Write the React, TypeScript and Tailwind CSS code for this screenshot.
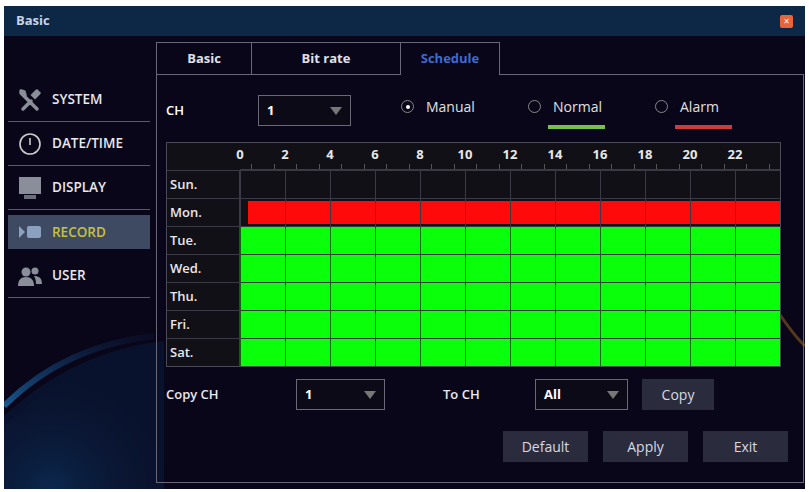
import React from "react";

const hours = [0, 2, 4, 6, 8, 10, 12, 14, 16, 18, 20, 22];
const days = ["Sun.", "Mon.", "Tue.", "Wed.", "Thu.", "Fri.", "Sat."];

function Select({ v, w }: { v: string; w: string }) {
  return (
    <div className={`${w} h-[31px] border border-[#6a6878] bg-[#0b0a16] flex items-center justify-between px-2`}>
      <span className="text-white font-bold text-[13px]">{v}</span>
      <svg width="12" height="10" viewBox="0 0 12 10"><path d="M0 1h12L6 9z" fill="#777"/></svg>
    </div>
  );
}

function Btn({ t, w }: { t: string; w: string }) {
  return <div className={`${w} h-[31px] bg-[#2a2c3e] text-[#d8d8e0] text-[14px] flex items-center justify-center`}>{t}</div>;
}

function Radio({ label, checked, line }: { label: string; checked?: boolean; line?: string }) {
  return (
    <div className="flex flex-col">
      <div className="flex items-center gap-3">
        <div className="w-[13px] h-[13px] rounded-full border border-[#888] flex items-center justify-center">
          {checked && <div className="w-[4px] h-[4px] rounded-full bg-white" />}
        </div>
        <span className="text-[#e0e0e0] text-[14px]">{label}</span>
      </div>
      <div className={`ml-[20px] mt-[8px] h-[4px] w-[57px] ${line ?? "bg-transparent"}`} />
    </div>
  );
}

export default function App() {
  return (
    <div className="w-[809px] h-[492px] bg-white pt-[6px] px-[4px] pb-[3px]" style={{ fontFamily: "'Open Sans', 'Liberation Sans', sans-serif" }}>
      <div className="relative w-full h-full bg-[#09061a] overflow-hidden flex flex-col">
        <svg className="absolute left-0 top-0" width="801" height="483" viewBox="0 0 801 483">
          <defs>
            <radialGradient id="g" cx="0.3" cy="1" r="0.8">
              <stop offset="0" stopColor="#0e3d6a" />
              <stop offset="1" stopColor="#09061a" stopOpacity="0" />
            </radialGradient>
            <linearGradient id="arc" x1="0" y1="1" x2="1" y2="0">
              <stop offset="0" stopColor="#1d6aa8" />
              <stop offset="1" stopColor="#0c2a55" stopOpacity="0.2" />
            </linearGradient>
          </defs>
          <path d="M0 420 Q80 350 160 330 L160 483 L0 483Z" fill="url(#g)" />
          <path d="M0 400 Q60 340 150 330" stroke="url(#arc)" strokeWidth="6" fill="none" opacity="0.8" />
          <path d="M0 483 L0 410 Q70 345 160 335 L160 483Z" fill="#0a1a3a" opacity="0.6" />
          <path d="M770 300 Q790 330 801 340" stroke="#8a5a20" strokeWidth="3" fill="none" opacity="0.6" />
        </svg>
        <div className="relative h-[30px] bg-[#0d2747] flex items-center justify-between px-[12px]">
          <span className="text-[#c8d4e8] text-[13px] font-bold">Basic</span>
          <div className="w-[13px] h-[13px] rounded-[2px] bg-[#e8643a] flex items-center justify-center text-white text-[10px] leading-none">×</div>
        </div>
        <div className="relative flex flex-1 pt-[6px] pb-[6px]">
          <div className="w-[146px] pl-[4px] pt-[36px] flex flex-col">
            {[
              ["SYSTEM", "sys"],
              ["DATE/TIME", "clock"],
              ["DISPLAY", "disp"],
              ["RECORD", "rec"],
              ["USER", "user"],
            ].map(([t, k]) => {
              const active = k === "rec";
              return (
                <div key={k} className={`h-[44px] ${active ? "py-[5px]" : "border-b border-[#5a5a66]"}`}>
                  <div className={`h-full flex items-center gap-[10px] pl-[10px] ${active ? "bg-[#3d4a62]" : ""}`}>
                  <div className="w-[24px] h-[24px] flex items-center justify-center">
                    {k === "sys" && <svg width="24" height="24" viewBox="0 0 24 24"><path d="M3 5l16 16M19 3l-4 4 2 2 4-4M5 21l8-8M3 3l3 1 1 3" stroke="#8a8e98" strokeWidth="3.5" fill="none" strokeLinecap="round"/></svg>}
                    {k === "clock" && <svg width="24" height="24" viewBox="0 0 24 24"><circle cx="12" cy="12" r="10" stroke="#ccc" strokeWidth="1.6" fill="none"/><path d="M12 6v7" stroke="#ccc" strokeWidth="1.6"/></svg>}
                    {k === "disp" && <svg width="24" height="24" viewBox="0 0 24 24"><rect x="1" y="1" width="22" height="17" fill="#8a8e9a"/><rect x="6" y="19" width="12" height="4" fill="#6a6e7a"/></svg>}
                    {k === "rec" && <svg width="24" height="24" viewBox="0 0 24 24"><path d="M1 6l6 6-6 6z" fill="#8aa2c0"/><rect x="9" y="6" width="14" height="12" rx="2" fill="#8aa2c0"/></svg>}
                    {k === "user" && <svg width="24" height="24" viewBox="0 0 24 24"><circle cx="8" cy="8" r="4.5" fill="#8a8e98"/><path d="M0 22c0-6 3-9 8-9s8 3 8 9z" fill="#8a8e98"/><circle cx="17" cy="7" r="3.5" fill="#8a8e98"/><path d="M16 12c5 0 8 2 8 8h-6c0-4-1-6-2-8z" fill="#8a8e98"/></svg>}
                  </div>
                  <span className={`text-[13.5px] font-semibold ${active ? "text-[#c8c040]" : "text-[#e8e8ee]"}`}>{t}</span>
                  </div>
                </div>
              );
            })}
          </div>
          <div className="flex-1 mr-[1px] ml-[6px] flex flex-col">
            <div className="flex h-[33px] text-[13px] font-bold">
              <div className="w-[95px] border-t border-l border-b border-[#6a6878] flex items-center justify-center text-[#e0e0e8]">Basic</div>
              <div className="w-[149px] border-t border-l border-b border-[#6a6878] flex items-center justify-center text-[#e0e0e8]">Bit rate</div>
              <div className="w-[100px] border-t border-l border-r border-[#6a6878] flex items-center justify-center text-[#3c6ad0]">Schedule</div>
              <div className="flex-1 border-b border-[#6a6878]" />
            </div>
            <div className="flex-1 border-l border-r border-b border-[#6a6878] pl-[9px] pr-[20px] pt-[20px]">
              <div className="flex items-start h-[47px]">
                <div className="w-[92px] h-[31px] flex items-center text-white text-[13px] font-semibold">CH</div>
                <Select v="1" w="w-[93px]" />
                <div className="ml-[50px] mt-[1px] flex gap-[50px]">
                  <Radio label="Manual" checked />
                  <Radio label="Normal" line="bg-[#74c24a]" />
                  <Radio label="Alarm" line="bg-[#d03a3a]" />
                </div>
              </div>
              <div className="w-[615px] border border-[#4a4a58] bg-[#101016]">
                <div className="flex h-[27px]">
                  <div className="w-[73px]" />
                  <div className="flex-1 relative border-b border-[#3a3a44]">
                    {hours.map((h) => (
                      <span key={h} className="absolute top-[2px] text-[#e8e8e8] text-[13px] font-bold -translate-x-1/2" style={{ left: `${(h / 24) * 100}%` }}>{h}</span>
                    ))}
                    {Array.from({ length: 24 }).map((_, i) => (
                      <div key={i} className="absolute bottom-0 w-px h-[5px] bg-[#555]" style={{ left: `${((i + 0.5) / 24) * 100}%` }} />
                    ))}
                  </div>
                </div>
                {days.map((d, i) => (
                  <div key={d} className="flex h-[28px] border-t border-[#3a3a44]">
                    <div className="w-[73px] flex items-center pl-[3px] text-[#e8e8ee] text-[13px] font-semibold border-r border-[#3a3a44]">{d}</div>
                    <div className="flex-1 relative">
                      {i === 1 && <div className="absolute left-[8px] right-0 top-[2px] bottom-[2px] bg-[#ff0a0a]" />}
                      {i > 1 && <div className="absolute inset-0 bg-[#0aff0a]" />}
                      {Array.from({ length: 12 }).map((_, j) => (
                        <div key={j} className={`absolute top-0 bottom-0 w-px ${i > 1 ? "bg-[#0a6a0a]" : "bg-[#3a3a44]"}`} style={{ left: `${(j / 12) * 100}%` }} />
                      ))}
                    </div>
                  </div>
                ))}
              </div>
              <div className="flex items-center mt-[12px] h-[31px]">
                <div className="w-[130px] text-[#e8e8ee] text-[13px] font-semibold">Copy CH</div>
                <Select v="1" w="w-[89px]" />
                <div className="w-[58px]" />
                <div className="w-[92px] text-[#e8e8ee] text-[13px] font-semibold">To CH</div>
                <Select v="All" w="w-[93px]" />
                <div className="w-[14px]" />
                <Btn t="Copy" w="w-[72px]" />
              </div>
              <div className="flex justify-end gap-[15px] mt-[21px] mr-[-5px]">
                <Btn t="Default" w="w-[85px]" />
                <Btn t="Apply" w="w-[85px]" />
                <Btn t="Exit" w="w-[85px]" />
              </div>
            </div>
          </div>
        </div>
      </div>
    </div>
  );
}
